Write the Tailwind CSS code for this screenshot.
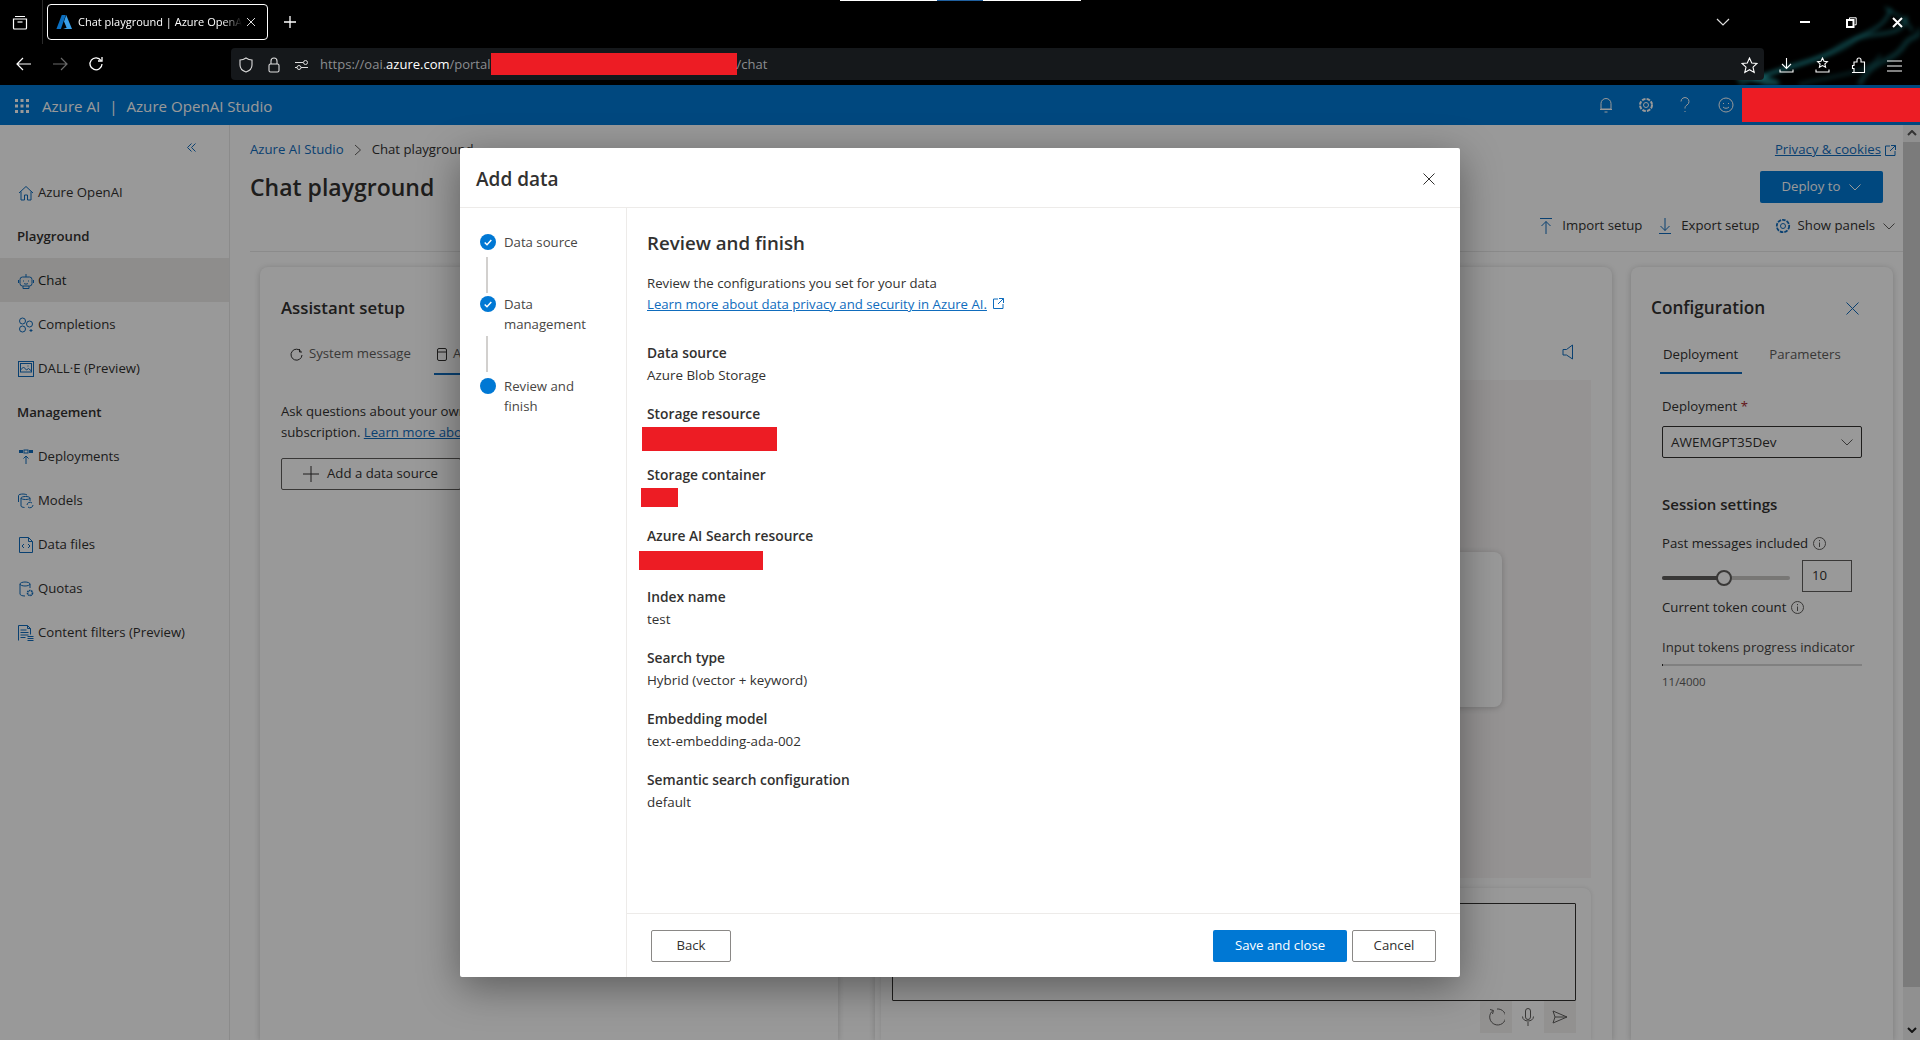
<!DOCTYPE html>
<html lang="en">
<head>
<meta charset="UTF-8">
<meta name="viewport" content="width=device-width, initial-scale=1.0">
<script src="https://cdn.jsdelivr.net/npm/@tailwindcss/browser@4"></script>
<title>Chat playground | Azure OpenAI Studio</title>
</head>
<body class="w-[1920px] h-[1040px] overflow-hidden flex flex-col bg-white text-[#323130] text-[13.2px] font-['Open_Sans',sans-serif]">

  <!-- browser chrome -->
  <div class="relative h-[85px] shrink-0 bg-black text-white overflow-hidden">
    <div class="absolute top-0 left-[840px] w-[241px] h-px bg-white"><div class="ml-[97px] w-[46px] h-px bg-[#1f5f9e]"></div></div>

    <!-- smoke in the wallpaper -->
    <svg class="absolute right-0 top-0 blur-[2px]" width="240" height="85" viewBox="0 0 240 85" fill="none">
      <g stroke="#1f8f96" stroke-linecap="round">
        <path d="M60 84C95 70 130 66 160 46C180 34 205 30 210 10" stroke-width="3" opacity=".4"/>
        <path d="M75 80C110 62 150 60 175 40C190 30 222 40 226 18" stroke-width="4" opacity=".35"/>
        <path d="M60 76C75 72 85 82 95 84" stroke-width="9" opacity=".5"/>
        <path d="M180 84C190 60 215 62 225 44C232 34 238 40 240 30" stroke-width="5" opacity=".3"/>
        <path d="M120 84C150 76 190 74 200 56" stroke-width="3" opacity=".25"/>
        <path d="M206 8C214 14 224 16 232 30" stroke-width="3" opacity=".3"/>
      </g>
    </svg>

    <div class="relative h-[44px] flex items-center">
      <svg class="ml-[12px]" width="16" height="16" viewBox="0 0 16 16" fill="none" stroke="#fff" stroke-width="1.2"><path d="M3 2.500h10M1.500 5h13v9a1 1 0 0 1-1 1h-11a1 1 0 0 1-1-1z"/><path d="M5.500 8h5"/></svg>
      <div class="ml-[14px] w-px h-[44px] bg-[#2a2a2a]"></div>
      <div class="ml-[4px] w-[221px] h-[36px] border border-white rounded-[4px] flex items-center pl-[8px] text-[11px]">
        <svg width="16" height="16" viewBox="0 0 18 18"><path d="M6.500 1h4.500L5.500 17H.5z" fill="#0a6fc2"/><path d="M11.500 1 18 17H8l4-1.500-3-7z" fill="#3aa0ea"/></svg>
        <span class="ml-[6px] w-[164px] whitespace-nowrap [mask-image:linear-gradient(to_right,black_88%,transparent)]">Chat playground | Azure OpenA</span>
        <svg class="ml-[4px]" width="10" height="10" viewBox="0 0 10 10" stroke="#ddd" stroke-width="1"><path d="M1 1l8 8M9 1l-8 8"/></svg>
      </div>
      <svg class="ml-[15px]" width="14" height="14" viewBox="0 0 14 14" stroke="#fff" stroke-width="1.300"><path d="M7 1v12M1 7h12"/></svg>
      <svg class="ml-[1419px]" width="14" height="8" viewBox="0 0 14 8" fill="none" stroke="#ddd" stroke-width="1.200"><path d="M1 1l6 6 6-6"/></svg>
      <div class="ml-[70px] w-[10px] h-[2px] bg-white"></div>
      <svg class="ml-[36px]" width="11" height="11" viewBox="0 0 11 11" fill="none" stroke="#fff"><path d="M3.500 2.500V.8h6.700v7H8.500" stroke-width="1"/><rect x="1" y="3" width="6.500" height="7" stroke-width="2"/></svg>
      <svg class="ml-[35px]" width="11" height="11" viewBox="0 0 11 11" stroke="#fff" stroke-width="2"><path d="M1 1l9 9M10 1l-9 9"/></svg>
    </div>

    <div class="relative h-[41px] flex items-start">
      <svg class="ml-[16px] mt-[13px]" width="16" height="14" viewBox="0 0 16 14" fill="none" stroke="#fff" stroke-width="1.200"><path d="M15 7H1M7 1 1 7l6 6"/></svg>
      <svg class="ml-[20px] mt-[13px]" width="16" height="14" viewBox="0 0 16 14" fill="none" stroke="#6a6a6a" stroke-width="1.200"><path d="M1 7h14M9 1l6 6-6 6"/></svg>
      <svg class="ml-[20px] mt-[12px]" width="16" height="16" viewBox="0 0 16 16" fill="none" stroke="#fff" stroke-width="1.300"><path d="M13 4.500A6 6 0 1 0 14 8"/><path d="M14 1v4h-4" /></svg>
      <div class="ml-[127px] mt-[4px] w-[1533px] h-[32px] pt-[2px] bg-[#15181b] rounded-[4px] flex items-center text-[13px] text-[#8b8d90]">
        <svg class="ml-[8px]" width="14" height="16" viewBox="0 0 14 16" fill="none" stroke="#ddd" stroke-width="1.100"><path d="M7 1c2 1.400 4 2 6 2v5c0 3.500-3 6-6 7-3-1-6-3.500-6-7V3c2 0 4-.6 6-2z"/></svg>
        <svg class="ml-[15px]" width="12" height="16" viewBox="0 0 12 16" fill="none" stroke="#ddd" stroke-width="1.100"><rect x="1" y="7" width="10" height="8" rx="1.500"/><path d="M3 7V4a3 3 0 0 1 6 0v3"/></svg>
        <svg class="ml-[14px]" width="15" height="12" viewBox="0 0 15 12" fill="none" stroke="#ddd" stroke-width="1"><path d="M1 3.500h8M1 8.500h2"/><circle cx="11.500" cy="3.500" r="2"/><circle cx="5" cy="8.500" r="2"/><path d="M7 8.500h7"/></svg>
        <span class="ml-[11px] whitespace-nowrap">https://oai.<span class="text-white">azure.com</span>/portal</span>
        <div class="-mt-[2px] w-[246px] h-[22px] bg-[#ed1c24]"></div>
        <span>/chat</span>
      </div>
    </div>
    <div class="absolute top-[57px] left-[1741px] flex items-center">
      <svg width="17" height="17" viewBox="0 0 17 17" fill="none" stroke="#fff" stroke-width="1.100"><path d="M8.500 1l2.200 5 5.300.5-4 3.600 1.200 5.400-4.700-2.800-4.700 2.800 1.200-5.400-4-3.600L6.300 6z"/></svg>
      <svg class="ml-[21px]" width="15" height="17" viewBox="0 0 15 17" fill="none" stroke="#fff" stroke-width="1.100"><path d="M7.500 1v10M3 7l4.500 4.500L12 7M1 12.500v2.500h13v-2.500"/></svg>
      <svg class="ml-[21px]" width="15" height="17" viewBox="0 0 15 17" fill="none" stroke="#fff" stroke-width="1.100"><path d="M7.500 1l1.500 3.200 3.400.4-2.500 2.300.7 3.400-3.100-1.700-3.100 1.700.7-3.400L2.600 4.600 6 4.200z"/><path d="M1 12.500v2.500h13v-2.500"/></svg>
      <svg class="ml-[21px]" width="15" height="17" viewBox="0 0 15 17" fill="none" stroke="#fff" stroke-width="1.100"><path d="M1 15.500h12.500V5H10V3a2 2 0 0 0-4 0v2H3v3.500H1.500v3H3v4z"/></svg>
      <svg class="ml-[21px]" width="15" height="12" viewBox="0 0 15 12" stroke="#fff" stroke-width="1.100"><path d="M0 1h15M0 6h15M0 11h15"/></svg>
    </div>
  </div>

  <div class="relative flex-1 flex flex-col min-h-0">
    <!-- suite header -->
    <div class="h-[40px] shrink-0 bg-[#0078d4] flex items-center text-white text-[15.1px] whitespace-nowrap">
      <svg class="ml-[14px] mt-[2px]" width="16" height="16" viewBox="0 0 16 16" fill="#fff"><g><rect x="1" y="1" width="3" height="3"/><rect x="6.500" y="1" width="3" height="3"/><rect x="12" y="1" width="3" height="3"/><rect x="1" y="6.500" width="3" height="3"/><rect x="6.500" y="6.500" width="3" height="3"/><rect x="12" y="6.500" width="3" height="3"/><rect x="1" y="12" width="3" height="3"/><rect x="6.500" y="12" width="3" height="3"/><rect x="12" y="12" width="3" height="3"/></g></svg>
      <span class="ml-[12px] mt-[3px]">Azure AI</span>
      <span class="ml-[9px] mt-[3px]">|</span>
      <span class="ml-[9px] mt-[3px]">Azure OpenAI Studio</span>
      <svg class="ml-auto" width="14" height="16" viewBox="0 0 14 16" fill="none" stroke="#fff"><path d="M2 12V6.500a5 5 0 0 1 10 0V12zM1 12.500h12M5.500 15h3"/></svg>
      <svg class="ml-[25px]" width="16" height="16" viewBox="0 0 16 16" fill="none" stroke="#fff"><circle cx="8" cy="8" r="2.500"/><circle cx="8" cy="8" r="6" stroke-dasharray="3.500 1.200" stroke-width="2"/></svg>
      <svg class="ml-[26px]" width="10" height="16" viewBox="0 0 10 16" fill="none" stroke="#fff"><path d="M1 4.500a4 4 0 1 1 6 3.500C5.500 9 5 9.500 5 11.500M5 14v1"/></svg>
      <svg class="ml-[28px]" width="16" height="16" viewBox="0 0 16 16" fill="none" stroke="#fff"><circle cx="8" cy="8" r="7"/><path d="M5 10c1.500 1.700 4.500 1.700 6 0M5.500 6v1M10.500 6v1"/></svg>
      <div class="relative z-20 ml-[8px] w-[178px] h-[34px] bg-[#ed1c24]"></div>
    </div>

    <div class="flex-1 flex min-h-0">
      <!-- nav -->
      <div class="w-[230px] shrink-0 border-r border-[#e8e8e8] bg-white">
        <div class="h-[45px] flex items-center justify-end pr-[33px]">
          <svg width="9" height="9" viewBox="0 0 9 9" fill="none" stroke="#0f6cbd"><path d="M4.500.5l-4 4 4 4M8.500.5l-4 4 4 4"/></svg>
        </div>
        <div class="h-[44px] pt-[2px] flex items-center pl-[18px] gap-[4px]">
          <svg width="16" height="16" viewBox="0 0 16 16" fill="none" stroke="#0f6cbd"><path d="M1 8l7-6.500L15 8M3 6.500V15h3.500v-5h3v5H13V6.500"/></svg>
          Azure OpenAI
        </div>
        <div class="h-[44px] pt-[2px] flex items-center pl-[17px] font-semibold">Playground</div>
        <div class="h-[44px] pt-[2px] flex items-center pl-[18px] gap-[4px] bg-[#edebe9] text-[#201f1e] font-medium">
          <svg width="16" height="16" viewBox="0 0 16 16" fill="none" stroke="#0f6cbd"><rect x="2" y="4" width="12" height="9" rx="2.500"/><path d="M8 4V1M5.500 7.500v1M10.500 7.500v1M6 10.500c1 .8 3 .8 4 0M5 13v2.500h6V13M.5 7v3M15.500 7v3"/></svg>
          Chat
        </div>
        <div class="h-[44px] pt-[2px] flex items-center pl-[18px] gap-[4px]">
          <svg width="16" height="16" viewBox="0 0 16 16" fill="none" stroke="#0f6cbd"><circle cx="4.500" cy="4" r="3"/><circle cx="4.500" cy="12" r="3"/><circle cx="11.500" cy="7" r="3"/><path d="M13 12v3M11.500 13.500h3"/></svg>
          Completions
        </div>
        <div class="h-[44px] pt-[2px] flex items-center pl-[18px] gap-[4px]">
          <svg width="16" height="16" viewBox="0 0 16 16" fill="none" stroke="#0f6cbd"><rect x=".5" y=".5" width="15" height="15"/><rect x="2.500" y="2.500" width="11" height="8.500"/><path d="M2.500 9l3-3 3 3 2-1.500 3 2.500M9.500 5h1"/></svg>
          DALL·E (Preview)
        </div>
        <div class="h-[44px] pt-[2px] flex items-center pl-[17px] font-semibold">Management</div>
        <div class="h-[44px] pt-[2px] flex items-center pl-[18px] gap-[4px]">
          <svg width="16" height="16" viewBox="0 0 16 16" fill="#0f6cbd"><rect x="1" y="1" width="4" height="3"/><rect x="6" y="1" width="4" height="3" fill="none" stroke="#0f6cbd"/><rect x="11" y="1" width="4" height="3"/><path d="M8 15V7M5.500 9.500 8 7l2.500 2.500" fill="none" stroke="#0f6cbd"/></svg>
          Deployments
        </div>
        <div class="h-[44px] pt-[2px] flex items-center pl-[18px] gap-[4px]">
          <svg width="16" height="16" viewBox="0 0 16 16" fill="none" stroke="#0f6cbd"><path d="M.5 9V2.500C.5 1.500 3 1 5 1c1.500 0 3 .3 4 1M3 13V5c0-1 2.500-1.500 4.500-1.500S12 4 12 5v3M3 5c0 1 2.500 1.500 4.500 1.500S12 6 12 5M3 13c0 .8 1.500 1.300 3.500 1.500"/><path d="M9 12a3 3 0 0 1 5-2M15 12a3 3 0 0 1-5 2"/></svg>
          Models
        </div>
        <div class="h-[44px] pt-[2px] flex items-center pl-[18px] gap-[4px]">
          <svg width="16" height="16" viewBox="0 0 16 16" fill="none" stroke="#0f6cbd"><path d="M1.500.5h9l4 4v11h-13zM10.500.5v4h4M6 7 4 9l2 2M10 7l2 2-2 2"/></svg>
          Data files
        </div>
        <div class="h-[44px] pt-[2px] flex items-center pl-[18px] gap-[4px]">
          <svg width="16" height="16" viewBox="0 0 16 16" fill="none" stroke="#0f6cbd"><path d="M2 3c0-1.200 2.500-2 5-2s5 .8 5 2v4M2 3v10c0 1 2 2 5 2M2 3c0 1.200 2.500 2 5 2s5-.8 5-2"/><circle cx="12" cy="12" r="2.500" stroke-width="1.600" stroke-dasharray="1.500 .6"/></svg>
          Quotas
        </div>
        <div class="h-[44px] pt-[2px] flex items-center pl-[18px] gap-[4px]">
          <svg width="16" height="16" viewBox="0 0 16 16" fill="none" stroke="#0f6cbd"><path d="M.5 15.500V.5h9l3 3v6M9.500.5v3h3M2.500 5h6M2.500 7.500h8M2.500 10h8M2.500 12.500h5M9.500 11.500h6M9.500 13.500h6M9.500 15.500h6"/></svg>
          Content filters (Preview)
        </div>
      </div>

      <!-- page -->
      <div class="flex-1 min-w-0 flex flex-col pl-[20px]">
        <div class="h-[127px] shrink-0 border-b border-[#e8e8e8] flex flex-col">
          <div class="h-[46px] pt-[4px] flex items-center">
            <span class="text-[#0f6cbd]">Azure AI Studio</span>
            <svg class="mx-[10px]" width="8" height="12" viewBox="0 0 8 12" fill="none" stroke="#605e5c"><path d="M1 1l5.500 5L1 11"/></svg>
            <span>Chat playground</span>
            <span class="ml-auto text-[#0f6cbd] underline">Privacy &amp; cookies</span>
            <svg class="ml-[4px] mr-[7px]" width="11" height="11" viewBox="0 0 11 11" fill="none" stroke="#0f6cbd"><path d="M5 1H.5v9.500H10V6M6 .5h4.500V5M10.500.5 5 6"/></svg>
          </div>
          <div class="h-[34px] flex items-center">
            <h1 class="text-[23px] font-semibold text-[#323130] -mt-[1px]">Chat playground</h1>
            <div class="ml-auto mr-[20px] self-start w-[123px] h-[32px] bg-[#0078d4] text-white flex items-center justify-center gap-[9px] rounded-[2px]">
              Deploy to
              <svg width="12" height="7" viewBox="0 0 12 7" fill="none" stroke="#fff"><path d="M.5.5 6 6 11.500.5"/></svg>
            </div>
          </div>
          <div class="h-[42px] flex items-center justify-end pr-[8px]">
            <svg width="12" height="16" viewBox="0 0 12 16" fill="none" stroke="#0f6cbd"><path d="M0 .5h12M6 16V3.500M1.500 8 6 3.500 10.500 8"/></svg>
            <span class="ml-[10px]">Import setup</span>
            <svg class="ml-[17px]" width="12" height="16" viewBox="0 0 12 16" fill="none" stroke="#0f6cbd"><path d="M0 15.500h12M6 0v12.500M1.500 8 6 12.500 10.500 8"/></svg>
            <span class="ml-[10px]">Export setup</span>
            <svg class="ml-[15px]" width="16" height="16" viewBox="0 0 16 16" fill="none" stroke="#0f6cbd"><circle cx="8" cy="8" r="2.500"/><circle cx="8" cy="8" r="6.200" stroke-width="1.800" stroke-dasharray="3.500 1.100"/></svg>
            <span class="ml-[7px]">Show panels</span>
            <svg class="ml-[8px]" width="12" height="7" viewBox="0 0 12 7" fill="none" stroke="#605e5c"><path d="M.5.5 6 6 11.500.5"/></svg>
          </div>
        </div>

        <div class="flex-1 min-h-0 pt-[15px] pl-[10px] flex">
          <!-- assistant setup -->
          <div class="w-[578px] shrink-0 bg-white rounded-t-lg shadow-[0_1px_6px_rgba(0,0,0,0.2)] pl-[21px]">
            <h2 class="mt-[25px] h-[32px] flex items-center text-[16.8px] font-semibold">Assistant setup</h2>
            <div class="mt-[9px] h-[42px] flex items-center text-[#605e5c] relative">
              <svg class="ml-[9px]" width="13" height="13" viewBox="0 0 13 13" fill="none" stroke="#323130"><path d="M11 3.500A5.500 5.500 0 1 0 12 7M9.500 1v3H12"/></svg>
              <span class="ml-[6px]">System message</span>
              <svg class="ml-[26px]" width="10" height="13" viewBox="0 0 10 13" fill="none" stroke="#323130"><rect x=".5" y=".5" width="9" height="12" rx="1.500"/><path d="M.5 4h9"/></svg>
              <span class="ml-[6px]">Add your data (preview)</span>
              <div class="absolute left-[153px] bottom-[0px] w-[130px] h-[2px] bg-[#0f6cbd]"></div>
            </div>
            <p class="mt-[26px] leading-[21px] whitespace-nowrap">Ask questions about your own data. Data is stored in your</p>
            <p class="leading-[21px] whitespace-nowrap">subscription. <span class="text-[#0f6cbd] underline">Learn more about your data</span></p>
            <div class="mt-[15px] w-[180px] h-[32px] border border-[#605e5c] rounded-[2px] flex items-center pl-[21px]">
              <svg width="16" height="16" viewBox="0 0 16 16" stroke="#323130"><path d="M8 0v16M0 8h16"/></svg>
              <span class="ml-[8px]">Add a data source</span>
            </div>
          </div>

          <!-- chat -->
          <div class="ml-[37px] w-[737px] shrink-0 bg-white rounded-t-lg shadow-[0_1px_6px_rgba(0,0,0,0.2)] flex flex-col">
            <div class="h-[113px] shrink-0 flex justify-end items-end pr-[38px] pb-[20px]">
              <svg width="12" height="16" viewBox="0 0 12 16" fill="none" stroke="#0f6cbd"><path d="M10.500 1v14L4.500 11H1V5.500h3.500z"/></svg>
            </div>
            <div class="h-[498px] shrink-0 ml-[16px] mr-[21px] bg-[#f8f5f5] pt-[172px] pr-[89px] flex justify-end items-start">
              <div class="w-[300px] h-[155px] bg-white rounded-lg shadow-[0_1px_6px_rgba(0,0,0,0.2)]"></div>
            </div>
            <div class="mt-[10px] flex-1 ml-[6px] mr-[21px] bg-white rounded-t-lg shadow-[0_0_4px_rgba(0,0,0,0.12)] pt-[15px] pl-[11px] pr-[15px]">
              <div class="h-[98px] border border-[#323130] rounded-[1px]"></div>
              <div class="flex justify-end">
                <div class="w-[32px] h-[32px] bg-[#f3f2f1] flex items-center justify-center">
                  <svg width="18" height="18" viewBox="0 0 18 18" fill="none" stroke="#605e5c"><path d="M6 2.500A8 8 0 1 0 10 1M3 1.500 6.500 2.500 5.500 6"/></svg>
                </div>
                <div class="w-[32px] h-[32px] flex items-center justify-center">
                  <svg width="12" height="18" viewBox="0 0 12 18" fill="none" stroke="#605e5c"><rect x="3.500" y=".5" width="5" height="11" rx="2.500"/><path d="M.5 8.500c0 6 11 6 11 0M6 14v4"/></svg>
                </div>
                <div class="w-[32px] h-[32px] bg-[#f3f2f1] flex items-center justify-center">
                  <svg width="16" height="14" viewBox="0 0 16 14" fill="none" stroke="#605e5c"><path d="M1 1l14 6-14 6 2-6zM3 7h12"/></svg>
                </div>
              </div>
            </div>
          </div>

          <!-- configuration -->
          <div class="ml-[19px] w-[262px] shrink-0 bg-white shadow-[0_1px_6px_rgba(0,0,0,0.2)] rounded-t-lg pl-[31px] pr-[31px] relative">
            <div class="mt-[25px] -ml-[11px] h-[32px] flex items-center justify-between mr-[3px]">
              <h2 class="text-[17.2px] font-semibold">Configuration</h2>
              <svg width="13" height="13" viewBox="0 0 13 13" stroke="#0f6cbd"><path d="M.5.500l12 12M12.500.5l-12 12"/></svg>
            </div>
            <div class="mt-[13px] h-[35px] flex items-center relative whitespace-nowrap">
              <span class="ml-[1px] font-medium">Deployment</span>
              <span class="ml-[31px] text-[#605e5c]">Parameters</span>
              <div class="absolute -left-[2px] bottom-[-2px] w-[82px] h-[2px] bg-[#0f6cbd]"></div>
            </div>
            <div class="mt-[23px] font-medium leading-[22px]">Deployment <span class="text-[#a4262c]">*</span></div>
            <div class="mt-[9px] w-[200px] h-[32px] border border-[#323130] rounded-[2px] flex items-center pl-[8px] pr-[8px] justify-between text-[13.5px]">
              <span>AWEMGPT35Dev</span>
              <svg width="12" height="7" viewBox="0 0 12 7" fill="none" stroke="#605e5c"><path d="M.5.5 6 6 11.500.5"/></svg>
            </div>
            <h3 class="mt-[35px] text-[15px] font-semibold leading-[22px]">Session settings</h3>
            <div class="mt-[17px] flex items-center gap-[5px] font-medium leading-[22px]">
              <span class="whitespace-nowrap">Past messages included</span>
              <svg width="13" height="13" viewBox="0 0 13 13" fill="none" stroke="#605e5c"><circle cx="6.500" cy="6.500" r="6"/><path d="M6.500 5.500V10M6.500 3v1.200"/></svg>
            </div>
            <div class="mt-[6px] flex items-center h-[32px]">
              <div class="relative w-[128px] h-[4px] bg-[#c8c6c4] rounded-full mt-[4px]">
                <div class="w-[61px] h-[4px] bg-[#605e5c] rounded-full"></div>
                <div class="absolute left-[54px] -top-[6px] w-[16px] h-[16px] bg-white border-2 border-[#605e5c] rounded-full"></div>
              </div>
              <div class="ml-[12px] w-[50px] h-[32px] border border-[#605e5c] flex items-center pl-[9px]">10</div>
            </div>
            <div class="mt-[4px] flex items-center gap-[5px] font-medium leading-[22px]">
              <span class="whitespace-nowrap">Current token count</span>
              <svg width="13" height="13" viewBox="0 0 13 13" fill="none" stroke="#605e5c"><circle cx="6.500" cy="6.500" r="6"/><path d="M6.500 5.500V10M6.500 3v1.200"/></svg>
            </div>
            <div class="mt-[18px] leading-[22px] whitespace-nowrap text-[#484644]">Input tokens progress indicator</div>
            <div class="mt-[6px] w-[200px] h-[2px] bg-[#d6d6d6]"><div class="w-px h-[2px] bg-[#323130]"></div></div>
            <div class="mt-[8px] text-[11.5px] leading-[16px] text-[#605e5c]">11/4000</div>
          </div>
        </div>
      </div>

      <!-- scrollbar -->
      <div class="w-[17px] shrink-0 bg-[#f0f0f0] flex flex-col items-center">
        <svg class="mt-[5px]" width="10" height="6" viewBox="0 0 10 6" fill="none" stroke="#555" stroke-width="2"><path d="M1 5l4-4 4 4"/></svg>
        <div class="mt-[6px] w-full h-[845px] bg-[#cdcdcd]"></div>
        <svg class="mt-[40px]" width="10" height="6" viewBox="0 0 10 6" fill="none" stroke="#222" stroke-width="2"><path d="M1 1l4 4 4-4"/></svg>
      </div>
    </div>

    <!-- dim -->
    <div class="absolute inset-0 z-10 bg-black/40"></div>

    <!-- add data dialog -->
    <div class="absolute z-20 left-[460px] top-[63px] w-[1000px] h-[829px] bg-white flex flex-col shadow-[0_10px_40px_rgba(0,0,0,0.4)] rounded-[2px]">
      <div class="h-[60px] shrink-0 border-b border-[#edebe9] flex items-center pt-[4px] pl-[16px] pr-[25px] justify-between">
        <h2 class="text-[19px] font-semibold text-[#323130]">Add data</h2>
        <svg class="-mt-[2px]" width="12" height="12" viewBox="0 0 12 12" stroke="#323130"><path d="M.5.500l11 11M11.500.5l-11 11"/></svg>
      </div>
      <div class="flex-1 min-h-0 flex">
        <!-- steps -->
        <div class="w-[167px] shrink-0 border-r border-[#edebe9] pt-[24px] pl-[20px]">
          <div class="flex gap-[8px] leading-[20px] text-[#484644]">
            <span class="mt-[2px] w-[16px] h-[16px] rounded-full bg-[#0078d4] flex items-center justify-center"><svg width="8" height="7" viewBox="0 0 8 7" fill="none" stroke="#fff" stroke-width="1.500"><path d="M.7 3.500 3 5.700 7.300 1"/></svg></span>
            Data source
          </div>
          <div class="ml-[6px] mt-[5px] w-[2px] h-[36px] bg-[#d2d0ce]"></div>
          <div class="mt-[1px] flex gap-[8px] leading-[20px] text-[#484644]">
            <span class="mt-[2px] w-[16px] h-[16px] shrink-0 rounded-full bg-[#0078d4] flex items-center justify-center"><svg width="8" height="7" viewBox="0 0 8 7" fill="none" stroke="#fff" stroke-width="1.500"><path d="M.7 3.500 3 5.700 7.300 1"/></svg></span>
            <span>Data<br>management</span>
          </div>
          <div class="ml-[6px] mt-[2px] w-[2px] h-[36px] bg-[#d2d0ce]"></div>
          <div class="mt-[4px] flex gap-[8px] leading-[20px] text-[#484644]">
            <span class="mt-[2px] w-[16px] h-[16px] shrink-0 rounded-full bg-[#0078d4]"></span>
            <span>Review and<br>finish</span>
          </div>
        </div>

        <div class="flex-1 min-w-0 flex flex-col">
          <div class="flex-1 min-h-0 pl-[20px] pt-[20px]">
            <h3 class="text-[18.7px] font-semibold leading-[30px]">Review and finish</h3>
            <p class="mt-[15px] leading-[21px]">Review the configurations you set for your data</p>
            <p class="leading-[21px]"><span class="text-[#0f6cbd] underline">Learn more about data privacy and security in Azure AI.</span><svg class="inline ml-[6px] mb-[3px]" width="11" height="11" viewBox="0 0 11 11" fill="none" stroke="#0f6cbd"><path d="M5 1H.5v9.500H10V6M6 .5h4.500V5M10.500.5 5 6"/></svg></p>

            <div class="mt-[26.5px] h-[61px]"><div class="text-[13.8px] font-semibold leading-[22px]">Data source</div><div class="text-[13.4px] leading-[22px]">Azure Blob Storage</div></div>
            <div class="h-[61px]"><div class="text-[13.8px] font-semibold leading-[22px]">Storage resource</div><div class="-ml-[5px] mt-[2px] w-[135px] h-[24px] bg-[#ed1c24]"></div></div>
            <div class="h-[61px]"><div class="text-[13.8px] font-semibold leading-[22px]">Storage container</div><div class="-ml-[6px] mt-[2px] w-[37px] h-[19px] bg-[#ed1c24]"></div></div>
            <div class="h-[61px]"><div class="text-[13.8px] font-semibold leading-[22px]">Azure AI Search resource</div><div class="-ml-[8px] mt-[4px] w-[124px] h-[19px] bg-[#ed1c24]"></div></div>
            <div class="h-[61px]"><div class="text-[13.8px] font-semibold leading-[22px]">Index name</div><div class="text-[13.4px] leading-[22px]">test</div></div>
            <div class="h-[61px]"><div class="text-[13.8px] font-semibold leading-[22px]">Search type</div><div class="text-[13.4px] leading-[22px]">Hybrid (vector + keyword)</div></div>
            <div class="h-[61px]"><div class="text-[13.8px] font-semibold leading-[22px]">Embedding model</div><div class="text-[13.4px] leading-[22px]">text-embedding-ada-002</div></div>
            <div class="h-[61px]"><div class="text-[13.8px] font-semibold leading-[22px]">Semantic search configuration</div><div class="text-[13.4px] leading-[22px]">default</div></div>
          </div>
          <div class="h-[64px] shrink-0 border-t border-[#edebe9] flex items-start pt-[16px] pl-[24px] pr-[24px] font-medium">
            <div class="w-[80px] h-[32px] border border-[#8a8886] rounded-[2px] flex items-center justify-center">Back</div>
            <div class="ml-auto w-[134px] h-[32px] bg-[#0078d4] text-white rounded-[2px] flex items-center justify-center">Save and close</div>
            <div class="ml-[5px] w-[84px] h-[32px] border border-[#8a8886] rounded-[2px] flex items-center justify-center">Cancel</div>
          </div>
        </div>
      </div>
    </div>
  </div>
</body>
</html>
